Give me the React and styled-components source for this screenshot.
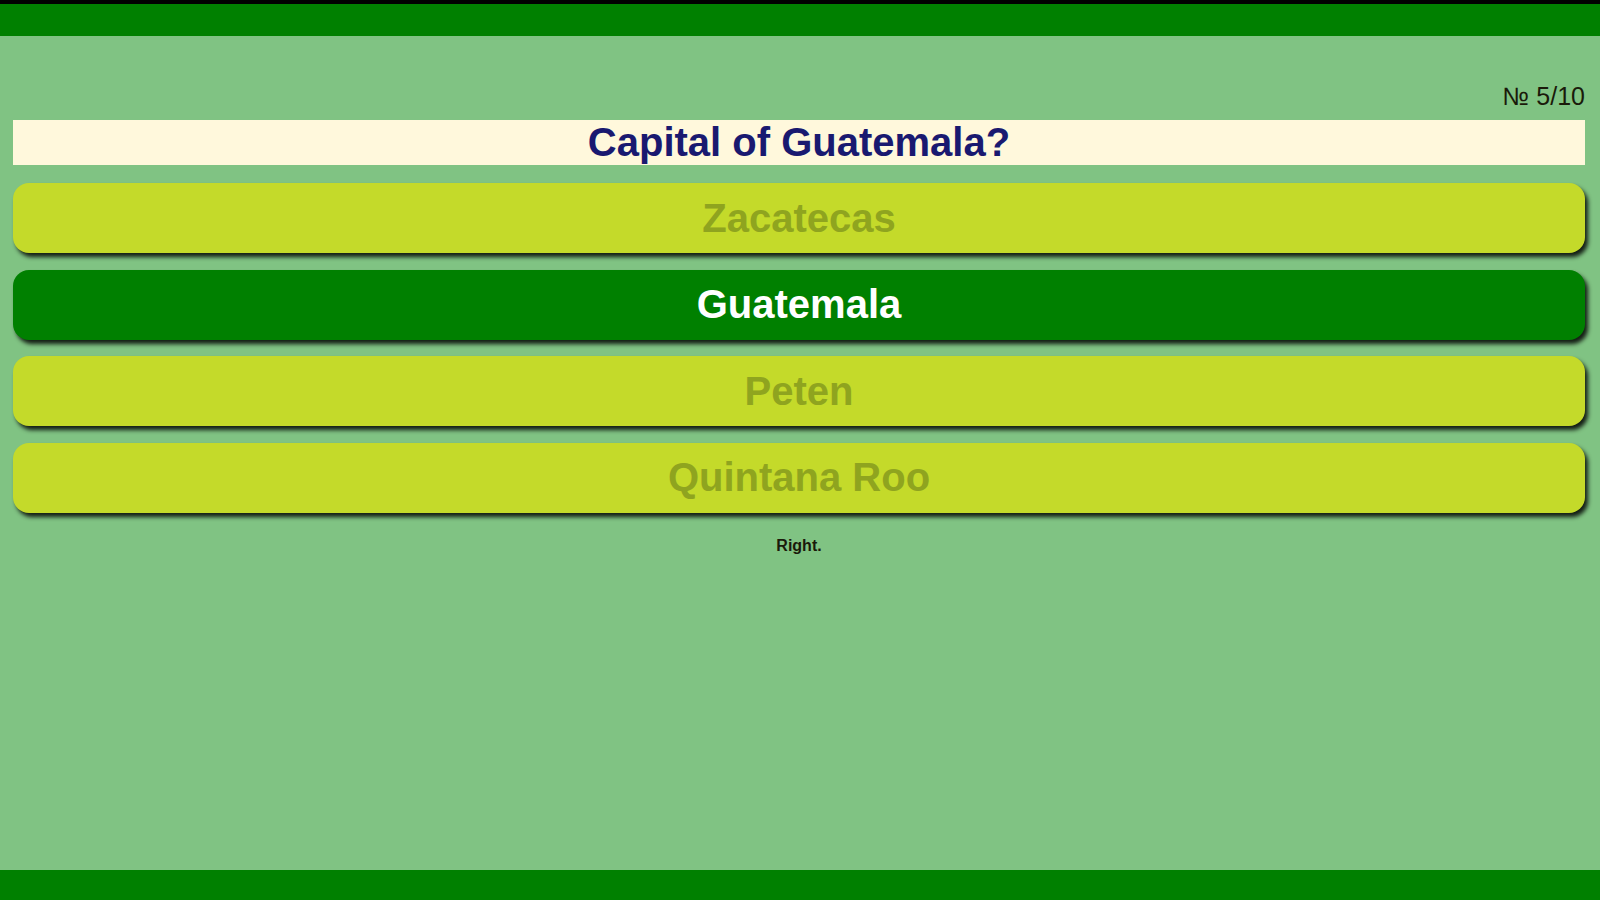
import React from 'react'
import { styled, createGlobalStyle } from 'styled-components'

const GlobalStyle = createGlobalStyle`
    html, body {
        margin: 0;
        padding: 0;
        height: 100%;
    }
    body {
        background: #80c383;
        font-family: "Liberation Sans", Arial, sans-serif;
    }
`

const answers = [
    { title: 'Zacatecas', right: false },
    { title: 'Guatemala', right: true },
    { title: 'Peten', right: false },
    { title: 'Quintana Roo', right: false },
]

const App = () => {
    return (
        <>
            <GlobalStyle />
            <QuizStyle>
                <TopBar />
                <Content>
                    <Counter>№ 5/10</Counter>
                    <Question>Capital of Guatemala?</Question>
                    <Answers>
                        {answers.map((a) => (
                            <Answer key={a.title} $right={a.right}>{a.title}</Answer>
                        ))}
                    </Answers>
                    <Result>Right.</Result>
                </Content>
                <BottomBar />
            </QuizStyle>
        </>
    )
}

const QuizStyle = styled.div`
    display: flex;
    flex-direction: column;
    height: 900px;
    background: #80c383;
`

const TopBar = styled.div`
    height: 32px;
    background: #008000;
    border-top: 4px solid #000;
`

const BottomBar = styled.div`
    height: 30px;
    background: #008000;
`

const Content = styled.div`
    flex: 1;
    display: flex;
    flex-direction: column;
    padding: 46px 15px 0 13px;
`

const Counter = styled.div`
    align-self: flex-end;
    font-size: 25px;
    line-height: 28px;
    color: #1a1a0a;
`

const Question = styled.h1`
    margin: 10px 0 0;
    background: #fff8dc;
    color: #191970;
    font-size: 40px;
    font-weight: bold;
    line-height: 45px;
    text-align: center;
`

const Answers = styled.div`
    display: flex;
    flex-direction: column;
    gap: 16.5px;
    margin-top: 18px;
`

const Answer = styled.div`
    height: 70px;
    display: flex;
    align-items: center;
    justify-content: center;
    border-radius: 16px;
    background: ${(p) => (p.$right ? '#008000' : '#c4da2a')};
    color: ${(p) => (p.$right ? '#ffffff' : '#8fa41f')};
    font-size: 40px;
    font-weight: bold;
    box-shadow: 3px 4px 4px rgba(0, 0, 0, 0.85);
    cursor: pointer;
`

const Result = styled.div`
    margin-top: 24px;
    text-align: center;
    font-size: 16px;
    font-weight: bold;
    color: #1a1a0a;
`

export default App
